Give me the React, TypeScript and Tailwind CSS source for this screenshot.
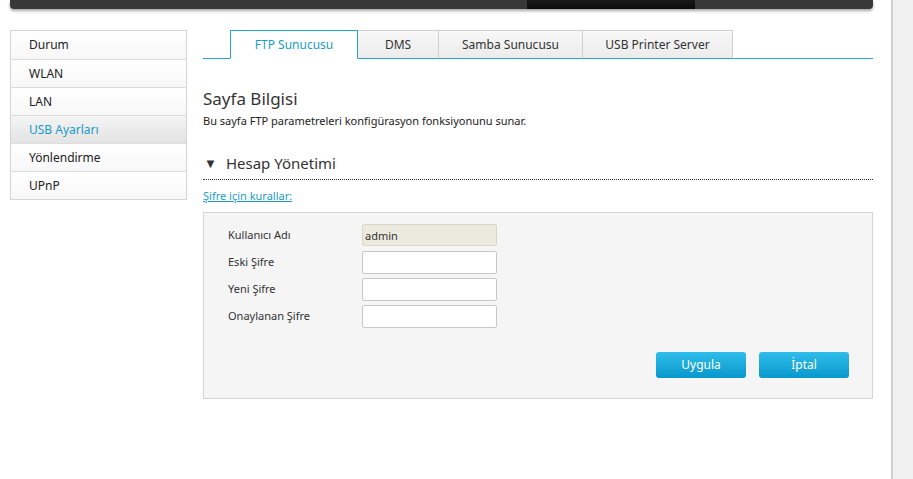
import { useState } from 'react'

const MENU = ['Durum', 'WLAN', 'LAN', 'USB Ayarları', 'Yönlendirme', 'UPnP']
const TABS = [
  { label: 'FTP Sunucusu', w: 'w-[128px]' },
  { label: 'DMS', w: 'w-[81px]' },
  { label: 'Samba Sunucusu', w: 'w-[144px]' },
  { label: 'USB Printer Server', w: 'w-[150px]' },
]
const FIELDS = ['Kullanıcı Adı', 'Eski Şifre', 'Yeni Şifre', 'Onaylanan Şifre']

export default function App() {
  const [active, setActive] = useState('USB Ayarları')
  const [tab, setTab] = useState('FTP Sunucusu')

  return (
    <div className="flex h-[479px] w-[913px] overflow-hidden bg-white text-[#333] font-['Noto_Sans','Open_Sans',sans-serif]">
      <div className="w-[891px] shrink-0">
        {/* top bar */}
        <div className="ml-[10px] flex h-[9px] w-[863px] overflow-hidden rounded-b-[4px] bg-[#383838] shadow-[0_2px_3px_rgba(0,0,0,0.35)]">
          <div className="w-[517px]" />
          <div className="w-[168px] bg-gradient-to-b from-[#1a1a1a] to-[#0b0b0b]" />
        </div>

        <div className="mt-[21px] flex">
          {/* sidebar */}
          <div className="ml-[10px] w-[177px] shrink-0 self-start border border-[#d4d4d4]">
            {MENU.map((m, i) => (
              <button
                key={m}
                onClick={() => setActive(m)}
                className={`flex h-[28px] w-full items-center pl-[18px] text-left text-[12px] ${i > 0 ? 'border-t border-[#dcdcdc]' : ''} ${active === m ? 'bg-gradient-to-b from-[#f4f4f4] to-[#e3e3e3] text-[#1b9bc9]' : 'bg-gradient-to-b from-white to-[#f7f7f7] text-[#222]'}`}
              >
                {m}
              </button>
            ))}
          </div>

          {/* content */}
          <div className="ml-[16px] w-[670px]">
            <div className="flex h-[29px] items-end border-b border-[#27a3cf] pl-[27px]">
              {TABS.map(t => (
                <button
                  key={t.label}
                  onClick={() => setTab(t.label)}
                  className={`-mb-px flex h-[29px] ${t.w} items-center justify-center border text-[12px] ${tab === t.label ? 'border-[#27a3cf] border-b-white bg-white text-[#1b9bc9]' : 'border-l-0 border-[#d0d0d0] border-b-[#27a3cf] bg-gradient-to-b from-[#f7f7f7] to-[#ececec] text-[#333]'}`}
                >
                  {t.label}
                </button>
              ))}
            </div>

            <h1 className="mt-[28px] text-[17px] leading-[24px] text-[#333]">Sayfa Bilgisi</h1>
            <p className="mt-[3px] text-[11px] leading-[14px] text-[#222]">Bu sayfa FTP parametreleri konfigürasyon fonksiyonunu sunar.</p>

            <div className="mt-[24px] flex items-center border-b border-dotted border-[#333] pb-[5px]">
              <span className="ml-[1px] text-[13px] leading-[22px] text-[#333]">▼</span>
              <span className="ml-[9px] text-[15px] leading-[22px] text-[#333]">Hesap Yönetimi</span>
            </div>

            <a href="#" className="mt-[9px] inline-block text-[11px] leading-[14px] text-[#1b9bc9] underline">Şifre için kurallar:</a>

            <div className="mt-[6px] h-[187px] border border-[#d4d4d4] bg-[#f5f5f5] pt-[11px]">
              <div className="flex flex-col gap-[5px]">
                {FIELDS.map((f, i) => (
                  <div key={f} className="flex h-[22px] items-center">
                    <span className="w-[158px] pl-[24px] text-[11px] text-[#333]">{f}</span>
                    {i === 0 ? (
                      <input readOnly value="admin" className="h-[22px] w-[135px] rounded-[2px] border border-[#d8d6c8] bg-[#eceadf] px-[2px] text-[11px] text-[#333] outline-none" />
                    ) : (
                      <input type="password" className="h-[23px] w-[135px] rounded-[2px] border border-[#c8c8c8] bg-white px-[2px] text-[11px] outline-none" />
                    )}
                  </div>
                ))}
              </div>
              <div className="mt-[25px] flex justify-end gap-[13px] pr-[23px]">
                <button className="h-[26px] w-[90px] rounded-[3px] bg-gradient-to-b from-[#2dbdea] to-[#0698cd] text-[12px] text-white">Uygula</button>
                <button className="h-[26px] w-[90px] rounded-[3px] bg-gradient-to-b from-[#2dbdea] to-[#0698cd] text-[12px] text-white">İptal</button>
              </div>
            </div>
          </div>
        </div>
      </div>
      {/* scrollbar strip */}
      <div className="w-[22px] shrink-0 border-l-2 border-[#cfcfcf] bg-[#f0f0f0]" />
    </div>
  )
}
